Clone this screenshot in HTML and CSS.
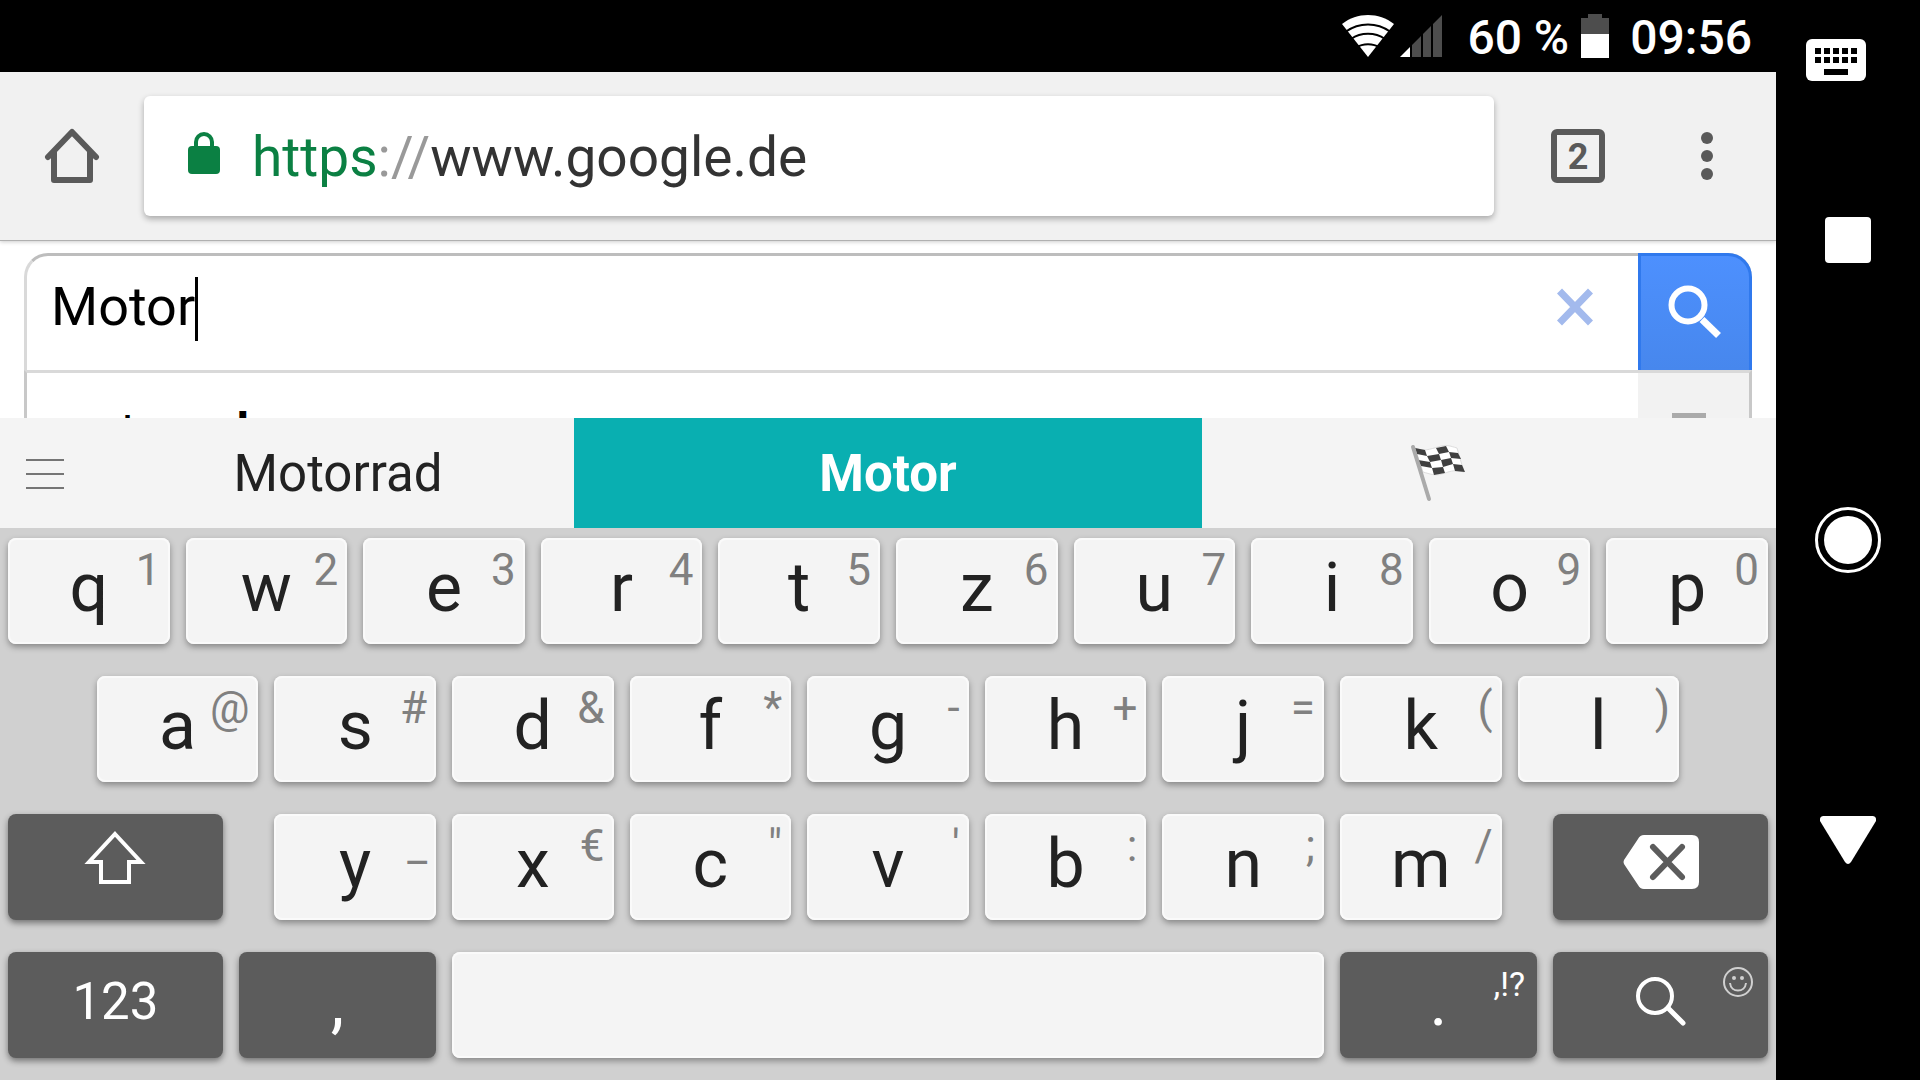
FILE: index.html
```html
<!DOCTYPE html>
<html lang="de">
<head>
<meta charset="utf-8">
<meta name="viewport" content="width=device-width, initial-scale=1">
<title>Google</title>
<link rel="stylesheet" href="styles.css">
</head>
<body>
<div class="screen">
  <header class="status">
    <svg class="wifi" width="52" height="42" viewBox="0 0 52 42" aria-label="WLAN">
      <path fill="#fff" d="M0 9C15-3 37-3 52 9L26 42Z"/>
      <path fill="none" stroke="#000" stroke-width="2" d="M4 16.500C17 7 35 7 48 16.500M9 24C19 17 33 17 43 24M14 32.500C21 28 31 28 38 32.500"/>
    </svg>
    <svg class="signal" width="42" height="42" viewBox="0 0 42 42" aria-label="Signal">
      <path fill="#fff" d="M0 42L10 32V42Z"/>
      <path fill="#4d4d4d" d="M12 30L21 21V42H12ZM23 19L31 11V42H23ZM33 9L42 0V42H33Z"/>
    </svg>
    <span class="percent">60 %</span>
    <svg class="battery" width="28" height="44" viewBox="0 0 28 44" aria-label="Akku">
      <path fill="#4d4d4d" d="M7 0H21V4H28V20H0V4H7Z"/>
      <path fill="#fff" d="M0 20H28V44H0Z"/>
    </svg>
    <time>09:56</time>
  </header>

  <nav class="toolbar">
    <button class="tool home" aria-label="Startseite">
      <svg width="56" height="56" viewBox="0 0 56 56" fill="none" stroke="#5a5a5a" stroke-width="6" stroke-linecap="round" stroke-linejoin="round">
        <path d="M4 29L28 4L52 29M10 24V52H46V24"/>
      </svg>
    </button>
    <button class="address" aria-label="Adresse">
      <svg width="32" height="42" viewBox="0 0 32 42">
        <rect y="14" width="32" height="28" rx="4" fill="#0b8043"/>
        <path fill="none" stroke="#0b8043" stroke-width="4" d="M8 16V10A8 8 0 0 1 24 10V16"/>
      </svg>
      <span class="url"><span class="scheme">https</span><span class="slashes">://</span>www.google.de</span>
    </button>
    <button class="tool tabs" aria-label="Tabs"><span class="tab-count">2</span></button>
    <button class="tool more" aria-label="Mehr">
      <svg width="12" height="48" viewBox="0 0 12 48" fill="#5a5a5a"><circle cx="6" cy="6" r="6"/><circle cx="6" cy="24" r="6"/><circle cx="6" cy="42" r="6"/></svg>
    </button>
  </nav>

  <main class="page">
    <form class="search">
      <label class="field">
        <input class="query" type="text" value="Motor" aria-label="Suche">
        <span class="caret"></span>
      </label>
      <button class="clear" type="button" aria-label="Löschen">
        <svg width="36" height="38" viewBox="0 0 36 38" stroke="#a3baed" stroke-width="7"><path d="M2.500 3L33.500 35M33.500 3L2.500 35"/></svg>
      </button>
      <button class="submit" type="submit" aria-label="Google-Suche">
        <svg width="54" height="54" viewBox="0 0 54 54" fill="none" stroke="#fff"><circle cx="20" cy="20" r="16.500" stroke-width="6"/><path stroke-width="7" d="M34 34.500L50.500 50.500"/></svg>
      </button>
    </form>
    <div class="results">
      <a class="result" href="#">motor<b>rad</b></a>
      <span class="refine"><svg width="34" height="34" viewBox="0 0 34 34" fill="none" stroke="#aaa" stroke-width="8"><path d="M34 4H4V34M6 6L32 32"/></svg></span>
    </div>
  </main>

  <section class="strip">
    <button class="menu" aria-label="Menü">
      <svg width="38" height="32" viewBox="0 0 38 32" fill="#757575"><path d="M0 2H38V4H0ZM0 16H38V18H0ZM0 30H38V32H0Z"/></svg>
    </button>
    <button class="word">Motorrad</button>
    <button class="word best">Motor</button>
    <button class="word" aria-label="Zielflagge">
      <svg width="56" height="58" viewBox="0 0 56 58">
        <path fill="#fff" stroke="#ddd" d="M5 4C14 8 20 5 28 3C36 0 40 2 47 4L54 28C43 25 39 28 32 30C25 32 20 30 13 28Z"/>
        <g fill="#404040">
          <path d="M5 4L15 6L17 12L7 10Z"/>
          <path d="M26 4L36 2L39 8L29 10Z"/>
          <path d="M17 12L29 10L31 16L20 18Z"/>
          <path d="M39 8L48 9L51 15L41 14Z"/>
          <path d="M8 16L20 18L22 24L11 22Z"/>
          <path d="M31 16L41 14L43 20L33 23Z"/>
          <path d="M22 24L33 23L35 29L24 31Z"/>
          <path d="M43 20L52 21L55 28L45 27Z"/>
        </g>
        <path stroke="#aaa" stroke-width="4" stroke-linecap="round" d="M3 3L19 55"/>
      </svg>
    </button>
  </section>

  <section class="keyboard" aria-label="Tastatur">
    <div class="row">
      <div class="cell"><button class="key">q<small>1</small></button></div>
      <div class="cell"><button class="key">w<small>2</small></button></div>
      <div class="cell"><button class="key">e<small>3</small></button></div>
      <div class="cell"><button class="key">r<small>4</small></button></div>
      <div class="cell"><button class="key">t<small>5</small></button></div>
      <div class="cell"><button class="key">z<small>6</small></button></div>
      <div class="cell"><button class="key">u<small>7</small></button></div>
      <div class="cell"><button class="key">i<small>8</small></button></div>
      <div class="cell"><button class="key">o<small>9</small></button></div>
      <div class="cell"><button class="key">p<small>0</small></button></div>
    </div>
    <div class="row inset">
      <div class="cell"><button class="key">a<small>@</small></button></div>
      <div class="cell"><button class="key">s<small>#</small></button></div>
      <div class="cell"><button class="key">d<small>&amp;</small></button></div>
      <div class="cell"><button class="key">f<small>*</small></button></div>
      <div class="cell"><button class="key">g<small>-</small></button></div>
      <div class="cell"><button class="key">h<small>+</small></button></div>
      <div class="cell"><button class="key">j<small>=</small></button></div>
      <div class="cell"><button class="key">k<small>(</small></button></div>
      <div class="cell"><button class="key">l<small>)</small></button></div>
    </div>
    <div class="row ends">
      <div class="cell wide"><button class="key dark" aria-label="Umschalt">
        <svg width="62" height="66" viewBox="0 0 62 66" fill="none" stroke="#fff" stroke-width="4"><path d="M31 3L57 31H45V51H17V31H5Z"/></svg>
      </button></div>
      <div class="cell"><button class="key">y<small>_</small></button></div>
      <div class="cell"><button class="key">x<small>€</small></button></div>
      <div class="cell"><button class="key">c<small>"</small></button></div>
      <div class="cell"><button class="key">v<small>'</small></button></div>
      <div class="cell"><button class="key">b<small>:</small></button></div>
      <div class="cell"><button class="key">n<small>;</small></button></div>
      <div class="cell"><button class="key">m<small>/</small></button></div>
      <div class="cell wide"><button class="key dark" aria-label="Rücktaste">
        <svg width="76" height="58" viewBox="0 0 76 58"><path fill="#fff" d="M21 0H69Q76 0 76 7V47Q76 54 69 54H21Q17 54 15 50L1 29Q0 27 1 25L15 4Q17 0 21 0Z"/><path stroke="#5c5c5c" stroke-width="6" stroke-linecap="round" d="M30 12L59 42M59 12L30 42"/></svg>
      </button></div>
    </div>
    <div class="row">
      <div class="cell wide"><button class="key dark numbers">123</button></div>
      <div class="cell medium"><button class="key dark">,</button></div>
      <div class="cell space"><button class="key" aria-label="Leertaste"></button></div>
      <div class="cell medium"><button class="key dark">.<small>,!?</small></button></div>
      <div class="cell wide"><button class="key dark" aria-label="Suchen">
        <svg width="52" height="52" viewBox="0 0 52 52" fill="none" stroke="#fff" stroke-width="4" stroke-linecap="round"><circle cx="20" cy="20" r="17"/><path stroke-width="5" d="M33 32L48 47"/></svg>
        <small><svg width="32" height="32" viewBox="0 0 32 32" fill="none" stroke="#d0d0d0" stroke-width="2"><circle cx="16" cy="16" r="14"/><path d="M8 17C9 27 23 27 24 17"/><g fill="#d0d0d0" stroke="none"><circle cx="12" cy="12" r="2"/><circle cx="20" cy="12" r="2"/></g></svg></small>
      </button></div>
    </div>
  </section>
</div>

<aside class="system">
  <button class="switcher" aria-label="Tastatur wechseln">
    <svg width="60" height="42" viewBox="0 0 60 42"><rect width="60" height="42" rx="6" fill="#fff"/><path d="M9 9h6v6h-6zM18 9h6v6h-6zM27 9h6v6h-6zM36 9h6v6h-6zM45 9h6v6h-6zM9 18h6v6h-6zM18 18h6v6h-6zM27 18h6v6h-6zM36 18h6v6h-6zM45 18h6v6h-6zM18 30h24v6H18z"/></svg>
  </button>
  <button aria-label="Übersicht"><svg width="46" height="46" viewBox="0 0 46 46"><rect width="46" height="46" rx="4" fill="#fff"/></svg></button>
  <button class="start" aria-label="Startbildschirm"><svg width="66" height="66" viewBox="0 0 66 66"><circle cx="33" cy="33" r="31.500" fill="none" stroke="#fff" stroke-width="3"/><circle cx="33" cy="33" r="24" fill="#fff"/></svg></button>
  <button aria-label="Zurück"><svg width="56" height="48" viewBox="0 0 56 48"><path fill="#fff" d="M3 0H53Q57 1 56 5L31 46Q28 50 25 46L0 5Q-1 1 3 0Z"/></svg></button>
</aside>
</body>
</html>
```
FILE: styles.css
```css
* { box-sizing: border-box; }

body {
  margin: 0;
  min-height: 100vh;
  display: flex;
  background: #000;
  color: #222;
  font-family: Roboto, "Liberation Sans", sans-serif;
}

button, input {
  margin: 0;
  padding: 0;
  border: 0;
  background: none;
  color: inherit;
  font: inherit;
}

svg { display: block; flex: none; }

.screen {
  flex: 1;
  min-width: 0;
  display: flex;
  flex-direction: column;
}

/* Status bar */
.status {
  height: 72px;
  padding-right: 24px;
  display: flex;
  align-items: center;
  justify-content: flex-end;
  color: #fff;
  font-size: 48px;
  font-weight: 500;
  line-height: 72px;
}
.signal { margin-left: 6px; }
.percent { margin: 4px 12px 0 25px; }
time { margin: 4px 0 0 21px; }

/* Browser toolbar */
.toolbar {
  position: relative;
  height: 169px;
  padding-bottom: 1px;
  display: flex;
  align-items: center;
  background: #f1f1f1;
  border-bottom: 1px solid #b0b0b0;
  box-shadow: 0 1px 4px rgba(0, 0, 0, .2);
}
.tool {
  display: flex;
  align-items: center;
  justify-content: center;
}
.home { width: 144px; }
.address {
  flex: 1;
  height: 120px;
  padding-left: 44px;
  display: flex;
  align-items: center;
  gap: 32px;
  border-radius: 6px;
  background: #fff;
  box-shadow: 0 3px 6px rgba(0, 0, 0, .3);
  color: #333;
  font-size: 55px;
}
.address svg { margin-bottom: 6px; }
.url { line-height: 64px; padding-top: 2px; }
.scheme { color: #0b8043; }
.slashes { color: #999; }
.tabs { width: 168px; }
.more { width: 90px; margin-right: 24px; }
.tab-count {
  width: 54px;
  height: 54px;
  border: 6px solid #5a5a5a;
  border-radius: 6px;
  color: #5a5a5a;
  font-size: 36px;
  font-weight: 700;
  line-height: 44px;
}

/* Search page */
.page {
  flex: 1 0 0;
  min-height: 177px;
  height: 177px;
  padding: 12px 24px 0;
  overflow: hidden;
  background: #fff;
}
.search {
  height: 117px;
  display: flex;
  border: 3px solid #d9d9d9;
  border-width: 3px 0 0 3px;
  border-top-color: #bdbdbd;
  border-radius: 24px 24px 0 0;
}
.field {
  flex: 1;
  padding: 4px 0 0 24px;
  display: flex;
  align-items: center;
  align-self: flex-start;
  height: 102px;
}
.query {
  field-sizing: content;
  padding-bottom: 4px;
  color: #000;
  font-size: 54px;
  line-height: 64px;
  outline: 0;
}
.caret { width: 3px; height: 64px; background: #000; }
.clear { width: 126px; display: flex; align-items: center; justify-content: center; padding-bottom: 12px; }
.submit {
  width: 114px;
  margin-top: -3px;
  padding-bottom: 3px;
  display: flex;
  align-items: center;
  justify-content: center;
  border: 3px solid #3079ed;
  border-bottom: 0;
  border-radius: 0 24px 0 0;
  background: linear-gradient(#4d90fe, #4787ed);
}
.results {
  height: 140px;
  display: flex;
  border: 3px solid #c8c8c8;
  border-top-color: #d9d9d9;
}
.result {
  flex: 1;
  padding: 28px 24px;
  color: #000;
  font-size: 48px;
  line-height: 60px;
  text-decoration: none;
}
.refine { width: 111px; padding: 40px 0 0 34px; background: #f2f2f2; }

/* Word suggestions */
.strip {
  height: 110px;
  padding-right: 102px;
  display: flex;
  background: #f4f4f4;
}
.menu { width: 102px; padding: 0 0 0 26px; }
.word {
  flex: 472 0 0;
  display: flex;
  align-items: center;
  justify-content: center;
  font-size: 51px;
}
.best { flex-grow: 628; background: #09afb1; color: #fff; font-weight: 700; }

/* Keyboard */
.keyboard {
  padding: 10px 0 22px;
  display: flex;
  flex-direction: column;
  gap: 32px;
  background: #d0d0d0;
}
.row { display: flex; }
.inset { padding: 0 5%; }
.cell { flex: none; width: calc(100% / 10); padding: 0 8px; }
.inset .cell { width: calc(100% / 9); }
.ends .wide:first-child { margin-right: 2%; }
.ends .wide:last-child { margin-left: 2%; }
.wide { width: 13%; }
.medium { width: 12%; }
.space { width: 50%; }
.key {
  position: relative;
  display: flex;
  justify-content: center;
  width: 100%;
  height: 106px;
  border-radius: 8px;
  background: #f4f4f4;
  box-shadow: 0 3px 6px rgba(0, 0, 0, .35), inset 0 0 0 2px #fafafa;
  font-size: 68px;
  line-height: 100px;
}
.key > svg { height: 100px; }
.key small {
  position: absolute;
  top: 0;
  right: 9px;
  color: #808080;
  font-size: 44px;
  line-height: 64px;
}
.dark {
  background: #5c5c5c;
  box-shadow: 0 3px 6px rgba(0, 0, 0, .45);
  color: #fff;
}
.dark small { right: 12px; color: #fff; font-size: 34px; }
.dark small svg { margin: 14px 2px 0 0; }
.numbers { font-size: 51px; }

/* System navigation */
.system {
  width: 144px;
  height: 100vh;
  padding-bottom: 120px;
  display: flex;
  flex-direction: column;
  align-items: center;
}
.system button {
  flex: 2 0 0;
  width: 100%;
  display: flex;
  align-items: center;
  justify-content: center;
}
.system .switcher { flex-grow: 1; padding-right: 24px; }
.system .start { flex-grow: 3; }
```
